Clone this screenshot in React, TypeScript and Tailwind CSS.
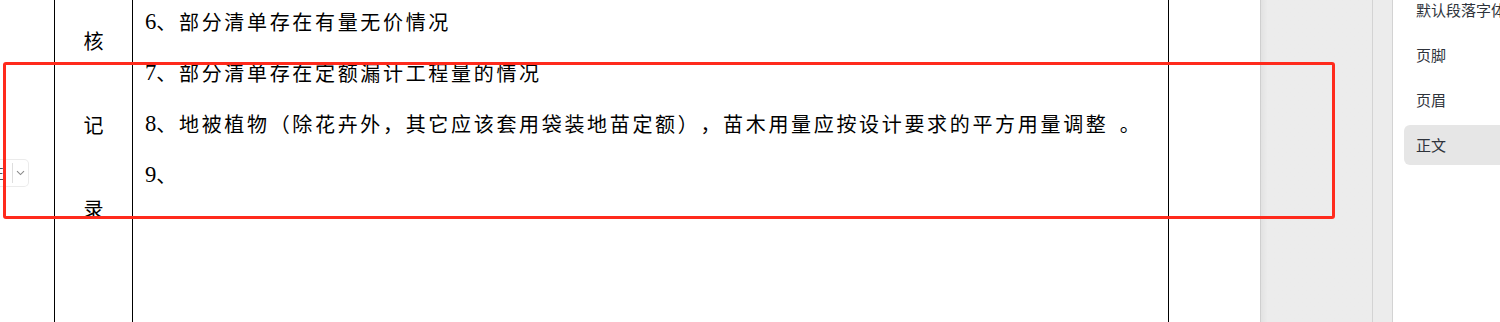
import React from "react";

const CJK = "font-['Noto_Sans_CJK_SC',sans-serif]";

function Num({ n }: { n: string }) {
  return <span className="font-['Liberation_Serif','Noto_Sans_CJK_SC',serif] text-[22.67px]">{n}</span>;
}

function Cjk({ t }: { t: string }) {
  return <span className={`${CJK} text-[20px] tracking-[2.67px] [text-spacing-trim:space-all]`}>{t}</span>;
}

export default function App() {
  return (
    <div className="relative flex h-[322px] w-[1500px] overflow-hidden bg-white [text-spacing-trim:space-all]">
      {/* document page */}
      <div className="flex h-full w-[1260px] shrink-0 bg-white text-black">
        <div className="relative h-full w-[54px] shrink-0">
          <div className="absolute left-0 top-[159px] flex h-[28px] w-[29px] items-center rounded-r-[5px] border border-l-0 border-[#ebebeb] bg-white">
            <span className={`${CJK} -ml-[10px] text-[14px] leading-none text-[#555]`}>正</span>
            <span className="ml-[8px] h-[20px] w-px bg-[#dedede]" />
            <svg className="ml-[3px]" width="9" height="6" viewBox="0 0 9 6" fill="none">
              <path d="M1 1.2 L4.5 4.6 L8 1.2" stroke="#8a8a8a" strokeWidth="1.1" />
            </svg>
          </div>
        </div>
        <div className="h-full w-[79px] shrink-0 border-x border-black">
          <div className={`-mt-px flex flex-col items-center ${CJK} text-[20px]`}>
            <div className="flex h-[84px] items-center">核</div>
            <div className="flex h-[84px] items-center">记</div>
            <div className="flex h-[84px] items-center">录</div>
          </div>
        </div>
        <div className="h-full w-[1035px] shrink-0 pl-[12px]">
          <div className="-mt-[3.5px] flex flex-col whitespace-nowrap">
            <div className="flex h-[51px] items-center">
              <Num n="6" />
              <Cjk t="、部分清单存在有量无价情况" />
            </div>
            <div className="flex h-[51px] items-center">
              <Num n="7" />
              <Cjk t="、部分清单存在定额漏计工程量的情况" />
            </div>
            <div className="flex h-[51px] items-center">
              <Num n="8" />
              <Cjk t="、地被植物（除花卉外，其它应该套用袋装地苗定额），苗木用量应按设计要求的平方用量调整" />
              <span className="font-['Liberation_Serif',serif] text-[22.67px]">&nbsp;&nbsp;</span>
              <Cjk t="。" />
            </div>
            <div className="flex h-[51px] items-center">
              <Num n="9" />
              <Cjk t="、" />
            </div>
          </div>
        </div>
        <div className="h-full w-[92px] shrink-0 border-l border-black" />
      </div>

      {/* gray gutter */}
      <div className="flex h-full w-[133px] shrink-0 bg-[#ececec]">
        <div className="h-full w-[112px] shrink-0 border-l border-[#cfcfcf] bg-gradient-to-r from-[#e2e2e2] via-[#ececec] via-[6%] to-[#ececec]" />
        <div className="h-full w-[21px] shrink-0 border-x border-[#d3d3d3] bg-[#ececec]" />
      </div>

      {/* styles panel */}
      <div className={`h-full flex-1 overflow-hidden bg-white pl-[11px] ${CJK}`}>
        <div className="-mt-[10px] flex flex-col gap-[5px] whitespace-nowrap text-[15px] text-[#2e333b]">
          <div className="flex h-[40px] items-center pl-[12px]">默认段落字体</div>
          <div className="flex h-[40px] items-center pl-[12px]">页脚</div>
          <div className="flex h-[40px] items-center pl-[12px]">页眉</div>
          <div className="flex h-[40px] items-center rounded-l-[6px] bg-[#e6e6e6] pl-[12px]">正文</div>
        </div>
      </div>

      {/* red annotation rectangle */}
      <div className="pointer-events-none absolute left-[3px] top-[62px] h-[157px] w-[1332px] rounded-[3px] border-[3px] border-[#ff2a1c]" />
    </div>
  );
}
